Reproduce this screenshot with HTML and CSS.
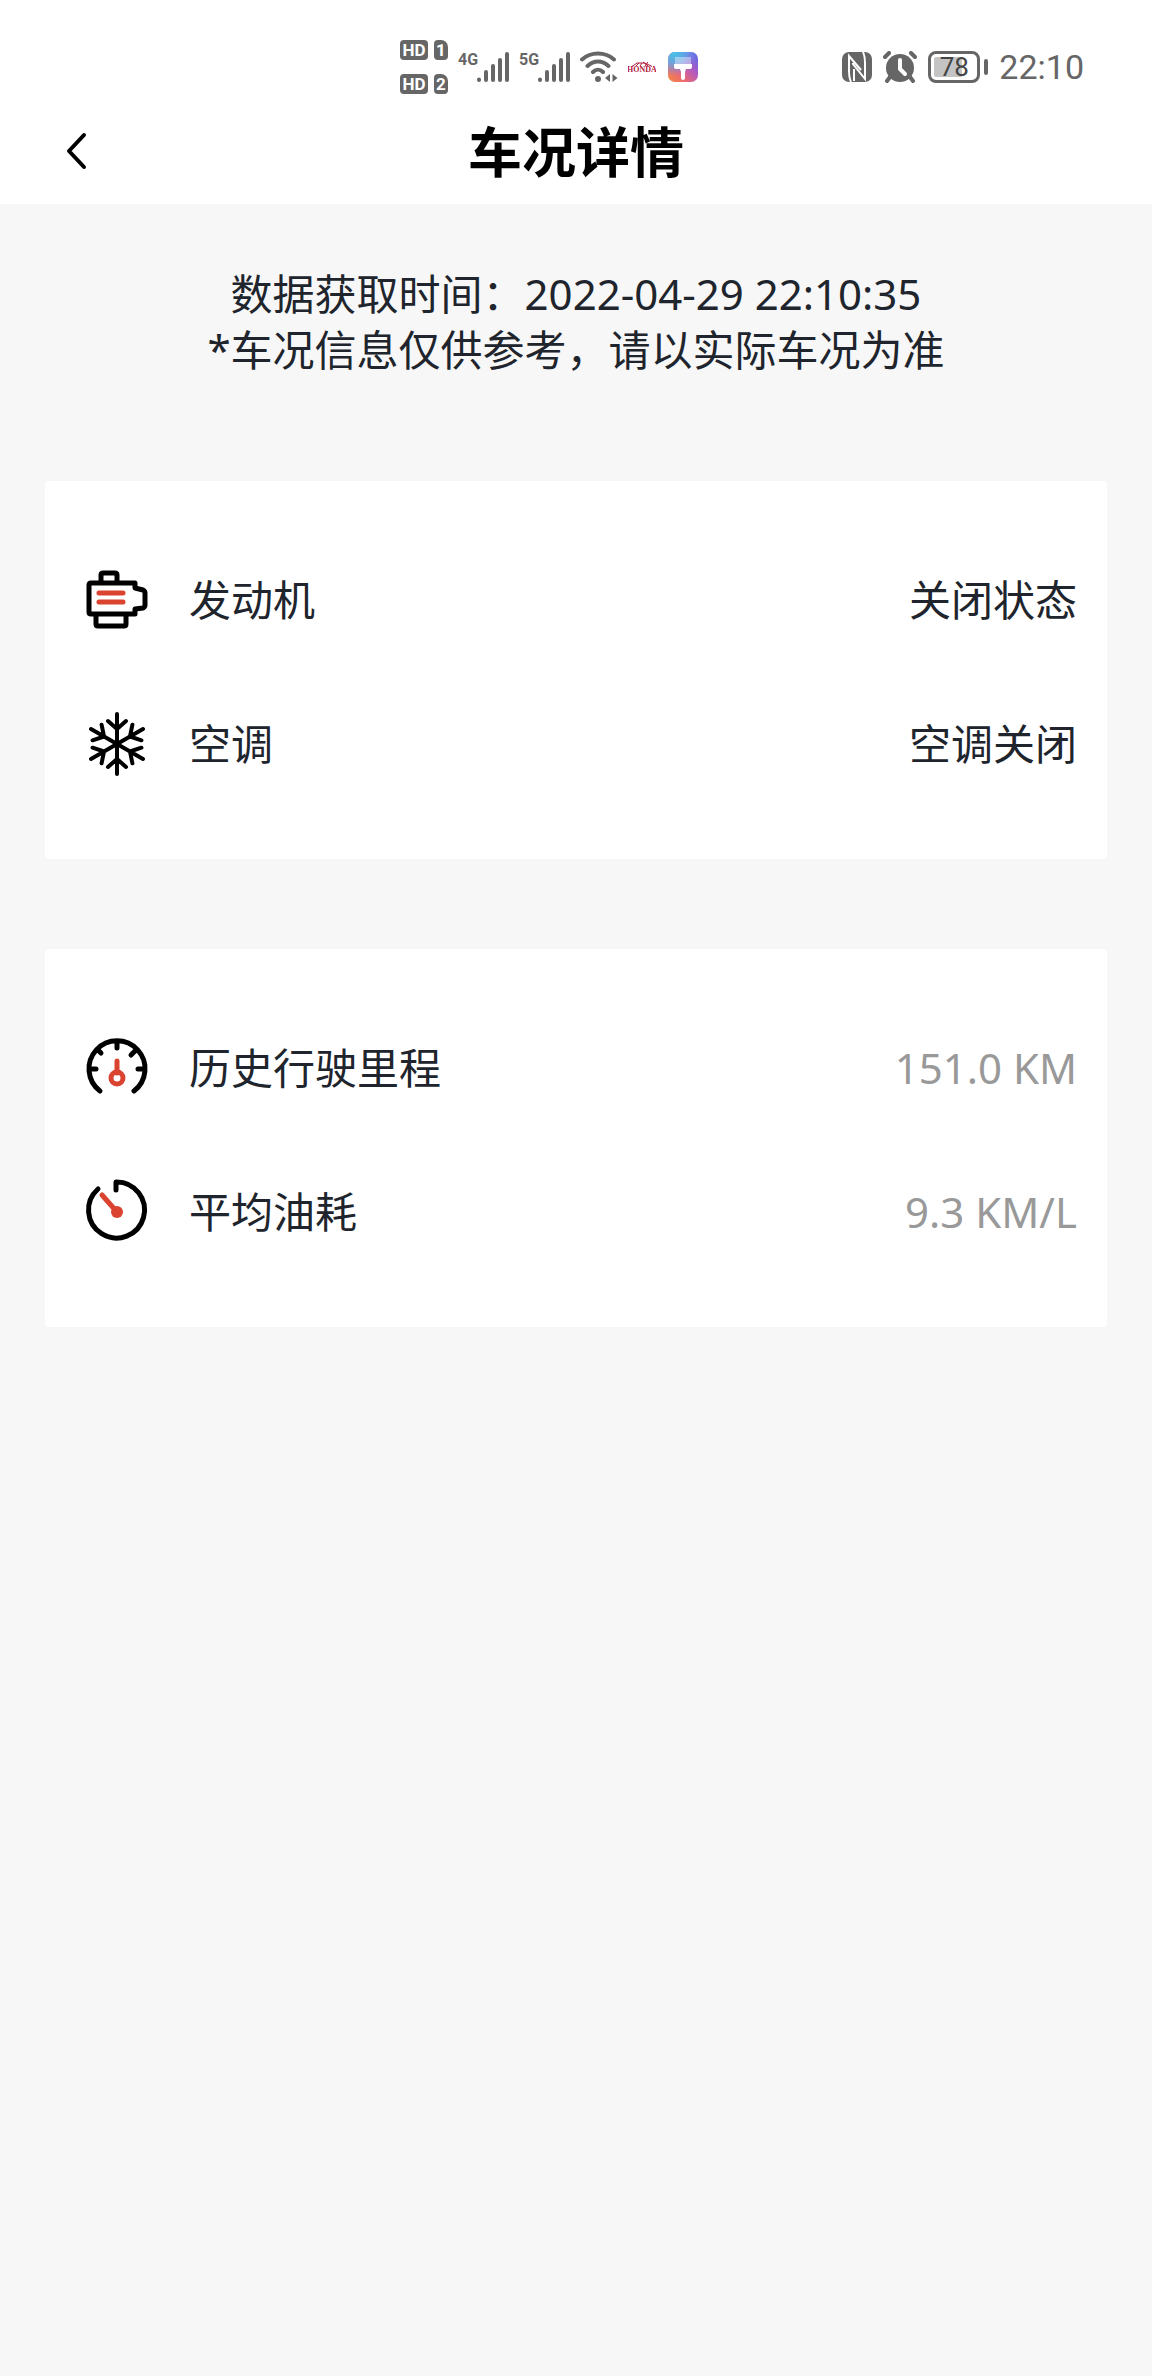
FILE: index.html
```html
<!DOCTYPE html>
<html lang="zh-CN">
<head>
<meta charset="utf-8">
<meta name="viewport" content="width=device-width, initial-scale=1">
<title>车况详情</title>
<link rel="stylesheet" href="styles.css">
</head>
<body>
<header class="header">
  <div class="status">
    <div class="status-group">
      <div class="sims">
        <div class="sim"><span class="hd">HD</span><span class="slot">1</span></div>
        <div class="sim"><span class="hd">HD</span><span class="slot">2</span></div>
      </div>
      <div class="signal">
        <span class="net">4G</span>
        <svg class="bars" viewBox="0 0 32 30" aria-hidden="true"><path d="M2 27.500v.5M9 20v8M16 14v14M23 8v20M30 2v26"/></svg>
      </div>
      <div class="signal">
        <span class="net">5G</span>
        <svg class="bars" viewBox="0 0 32 30" aria-hidden="true"><path d="M2 27.500v.5M9 20v8M16 14v14M23 8v20M30 2v26"/></svg>
      </div>
      <svg class="wifi" viewBox="0 0 38 32" aria-hidden="true">
        <path class="wifi-arc" d="M2 8.500C11 .5 25 .5 34 8.500M7.500 15C14 9 22 9 28.500 15M13 21C16 18 20 18 23 21"/>
        <circle cx="18" cy="28" r="3"/>
        <path d="M30 23v8l-5-4zM32.500 23v8l5-4z"/>
      </svg>
      <svg class="honda" viewBox="0 0 28 12" role="img" aria-label="HONDA">
        <path d="M4 5.500L9 2h8l7 3.500M8 5l3-3M12 5l2-3M15 1l5 4M20 1l-3 4"/>
        <text x="14" y="11" text-anchor="middle">HONDA</text>
      </svg>
      <svg class="theme" viewBox="0 0 30 30" aria-hidden="true">
        <defs>
          <linearGradient id="hue" x1="0" y1="1" x2="1" y2="0"><stop offset="0" stop-color="#f58a3c"/><stop offset=".3" stop-color="#ec6a70"/><stop offset=".6" stop-color="#b45ac0"/><stop offset="1" stop-color="#4a6df0"/></linearGradient>
          <radialGradient id="sky" cx=".2" cy="0" r=".8"><stop offset="0" stop-color="#3fc8e8"/><stop offset=".5" stop-color="#5ab0ec" stop-opacity=".8"/><stop offset="1" stop-color="#7a8cf0" stop-opacity="0"/></radialGradient>
        </defs>
        <rect width="30" height="30" rx="7" fill="url(#hue)"/>
        <rect width="30" height="30" rx="7" fill="url(#sky)"/>
        <path d="M7 5h16v8H7z" fill="#fff" opacity=".4"/>
        <path d="M6 12h18v3q0 2-2 2h-4l-1 3v6a2 2 0 0 1-4 0v-6l-1-3H8q-2 0-2-2z" fill="#fff"/>
      </svg>
    </div>
    <div class="status-group status-right">
      <svg class="nfc" viewBox="0 0 30 30" aria-hidden="true">
        <rect width="30" height="30" rx="7"/>
        <path d="M9 30Q7 26 7 19V4L19 18M11 11V12L23 27V11Q23 4 21 0M12 29V17"/>
      </svg>
      <svg class="alarm" viewBox="0 0 34 32" aria-hidden="true">
        <circle cx="17" cy="17" r="14"/>
        <path class="alarm-edge" d="M2 6l4-4M32 6l-4-4M7 26l-3 4M27 26l3 4"/>
        <path class="alarm-hand" d="M17 9v9l5 5"/>
      </svg>
      <div class="battery"><span class="level">78</span></div>
      <time class="clock">22:10</time>
    </div>
  </div>
  <nav class="nav">
    <button class="back" type="button" aria-label="返回">
      <svg viewBox="0 0 24 40" aria-hidden="true"><path d="M20 3L5 19l15 16"/></svg>
    </button>
    <h1 class="title">车况详情</h1>
  </nav>
</header>
<main class="main">
  <p class="notice">数据获取时间：2022-04-29 22:10:35<br>*车况信息仅供参考，请以实际车况为准</p>
  <dl class="card">
    <div class="row">
      <dt class="label">
        <svg class="icon" viewBox="0 0 60 60" aria-hidden="true">
          <path d="M14 12V5q0-2 2-2h12q2 0 2 2v7M4 13h44v5l8 2q2 1 2 3v12q0 2-2 3l-8 1v5H4q-2 0-2-2V15q0-2 2-2zM9 45v9q0 2 2 2h26q2 0 2-2v-9"/>
          <path class="accent" d="M12 23h24M12 32h24"/>
        </svg>发动机</dt>
      <dd class="value">关闭状态</dd>
    </div>
    <div class="row">
      <dt class="label">
        <svg class="icon thin" viewBox="0 0 60 60" aria-hidden="true">
          <g id="arms"><path d="M30 0v60M21 7l9 8 9-8M21 53l9-8 9 8"/></g>
          <use href="#arms" transform="rotate(60 30 30)"/>
          <use href="#arms" transform="rotate(120 30 30)"/>
        </svg>空调</dt>
      <dd class="value">空调关闭</dd>
    </div>
  </dl>
  <dl class="card">
    <div class="row">
      <dt class="label">
        <svg class="icon" viewBox="0 0 60 60" aria-hidden="true">
          <path d="M13 53A28 28 0 1 1 47 53M30 5v5M12 13l2 2M48 13l-4 4M4 31h5M56 31h-5"/>
          <path class="accent" d="M30 23v12"/><circle class="accent" cx="30" cy="40" r="6"/>
        </svg>历史行驶里程</dt>
      <dd class="value muted">151.0 KM</dd>
    </div>
    <div class="row">
      <dt class="label">
        <svg class="icon" viewBox="0 0 60 60" aria-hidden="true">
          <path d="M11 7A28 28 0 1 0 29 0v8"/>
          <path class="accent" d="M15 13l15 17"/><circle class="dot" cx="30" cy="30" r="6"/>
        </svg>平均油耗</dt>
      <dd class="value muted">9.3 KM/L</dd>
    </div>
  </dl>
</main>
</body>
</html>
```
FILE: styles.css
```css
* { box-sizing: border-box; }
body {
  margin: 0;
  min-height: 100vh;
  background: #f7f7f7;
  color: #20242c;
  font-family: "Noto Sans", "Noto Sans CJK SC", sans-serif;
  font-size: 42px;
  line-height: 56px;
}
.header { background: #fff; }

.status {
  display: flex;
  justify-content: space-between;
  height: 100px;
  padding: 34px 68px 0 400px;
  color: #666;
  font-family: Roboto, sans-serif;
}
.status-group { display: flex; align-items: center; gap: 10px; }
.status-right { gap: 11px; }
.sims { display: grid; gap: 14px; }
.sim { display: flex; gap: 6px; }
.hd, .slot {
  height: 20px;
  border-radius: 4px;
  background: #666;
  color: #fff;
  font-size: 17px;
  font-weight: 700;
  line-height: 20px;
  text-align: center;
}
.hd { width: 28px; }
.slot { width: 14px; border-top-right-radius: 7px; }
.signal { display: flex; height: 30px; }
.net {
  width: 19px;
  font-family: "Liberation Sans Narrow", Roboto, sans-serif;
  font-size: 16px;
  font-weight: 700;
  line-height: 15px;
}
.bars { width: 32px; height: 30px; fill: none; stroke: #666; stroke-width: 4; stroke-linecap: round; }
.wifi { width: 38px; height: 32px; fill: #666; }
.wifi-arc { fill: none; stroke: #666; stroke-width: 4; stroke-linecap: round; }
.honda { width: 28px; height: 12px; fill: #b0183c; font: 700 8px "Liberation Serif", serif; }
.honda path { fill: none; stroke: #b0183c; }
.theme { width: 30px; height: 30px; margin-left: 2px; }
.nfc { width: 30px; height: 30px; fill: #666; }
.nfc path { fill: none; stroke: #fff; stroke-width: 2; }
.alarm { width: 34px; height: 32px; fill: #666; }
.alarm path { fill: none; stroke-width: 4; stroke-linecap: round; stroke-linejoin: round; }
.alarm-edge { stroke: #666; }
.alarm-hand { stroke: #fff; }
.battery { display: flex; align-items: center; gap: 4px; }
.battery::after { content: ""; width: 4px; height: 16px; border-radius: 2px; background: #666; }
.level {
  width: 52px;
  height: 32px;
  border: 3px solid #666;
  border-radius: 8px;
  background: linear-gradient(90deg, #c4c4c4 70%, #fff 70%) content-box;
  padding: 3px;
  color: #444;
  font-size: 26px;
  line-height: 20px;
  text-align: center;
}
.clock { font-size: 34px; line-height: 40px; }

.nav {
  display: grid;
  grid-template-columns: 1fr auto 1fr;
  align-items: center;
  height: 104px;
  padding: 0 48px;
}
.back {
  justify-self: start;
  display: flex;
  padding: 16px;
  border: 0;
  background: none;
}
.back svg { width: 24px; height: 40px; fill: none; stroke: #000; stroke-width: 4; stroke-linecap: round; stroke-linejoin: round; }
.title { margin: 0; color: #000; font-size: 54px; font-weight: 700; line-height: 80px; }

.main { display: grid; gap: 90px; padding: 62px 45px; }
.notice { margin: 0; padding-bottom: 13px; text-align: center; }
.card { margin: 0; padding: 47px 30px 43px 42px; border-radius: 4px; background: #fff; }
.row { display: flex; align-items: center; justify-content: space-between; height: 144px; }
.label { display: flex; align-items: center; gap: 42px; }
.value { margin: 0; }
.muted { color: #999; }
.icon { width: 60px; height: 60px; overflow: visible; fill: none; stroke: #000; stroke-width: 5; stroke-linecap: round; stroke-linejoin: round; }
.icon.thin { stroke-width: 4; }
.icon .accent { stroke: #d9432f; }
.icon .dot { fill: #d9432f; stroke: none; }
```
